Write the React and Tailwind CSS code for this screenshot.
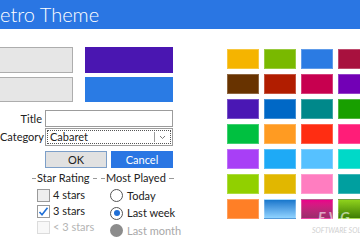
import React from "react";

const tiles = [
  ["bg-[#f5b400]", "bg-[#79b900]", "bg-[#2b7be3]", "bg-[#a8113e]"],
  ["bg-[#683300]", "bg-[#b11d00]", "bg-[#c7004f]", "bg-[#7200b6]"],
  ["bg-[#4a17b4]", "bg-[#0068c6]", "bg-[#00888a]", "bg-[#189f00]"],
  ["bg-[#00c040]", "bg-[#ff9b22]", "bg-[#ff2d12]", "bg-[#ff1d78]"],
  ["bg-[#a83ff6]", "bg-[#1eaaf6]", "bg-[#56c1ff]", "bg-[#00d9c8]"],
  ["bg-[#91d000]", "bg-[#e1b700]", "bg-[#ff7dc0]", "bg-[#009f9f]"],
  [
    "bg-[#ff7f26]",
    "bg-gradient-to-b from-[#1677cc] to-[#8fd3ff]",
    "bg-gradient-to-b from-[#ea008a] to-[#9a2c6c]",
    "bg-gradient-to-b from-[#8fd21c] to-[#3f7d05]",
  ],
];

const Legend = ({ children }) => (
  <div className="flex items-center h-[14px] text-[#222] whitespace-nowrap">
    <span className="w-[4px] h-px bg-[#9a9a9a] shrink-0" />
    <span className="px-[1px]">{children}</span>
    <span className="flex-1 h-px bg-[#9a9a9a] ml-[2px]" />
  </div>
);

const Check = ({ checked, disabled, label }) => (
  <div className="flex items-center h-[16px] gap-[3px] whitespace-nowrap">
    <span
      className={`shrink-0 w-[13px] h-[13px] border flex items-center justify-center ${
        disabled
          ? "border-[#dcdcdc] bg-[#f8f8f8]"
          : checked
          ? "border-[#9a9a9a] bg-white"
          : "border-[#9a9a9a] bg-[#eeeeee]"
      }`}
    >
      {checked && (
        <svg width="11" height="11" viewBox="0 0 11 11">
          <path d="M1.5 6 L4 8.8 L9.5 1.8" stroke="#1f6fd6" strokeWidth="1.6" fill="none" />
        </svg>
      )}
    </span>
    <span className={disabled ? "text-[#b4b4b4]" : "text-[#222]"}>{label}</span>
  </div>
);

const Radio = ({ state, label }) => (
  <div className="flex items-center h-[17.5px] gap-[4px] whitespace-nowrap">
    {state === "disabled" ? (
      <span className="shrink-0 w-[13px] h-[13px] rounded-full bg-[#8c8c8c]" />
    ) : (
      <span className="shrink-0 w-[13px] h-[13px] rounded-full border border-[#555] bg-white flex items-center justify-center">
        {state === "on" && <span className="w-[6px] h-[6px] rounded-full bg-[#1f6fd6]" />}
      </span>
    )}
    <span className={state === "disabled" ? "text-[#a8a8a8]" : "text-[#222]"}>{label}</span>
  </div>
);

export default function App() {
  return (
    <div className="w-[360px] h-[240px] overflow-hidden bg-white relative font-['Lato',sans-serif] text-[11px] leading-[14px]">
      <div className="h-[29px] bg-[#2a76e3] flex items-center">
        <span className="text-white text-[20px] font-light leading-none -mt-[1px]">etro Theme</span>
      </div>

      <div className="flex">
        <div className="w-[174px] pt-[18px]">
          <div className="grid grid-cols-[73px_88px] grid-rows-[26px_25px] gap-x-[12px] gap-y-[4px]">
            <div className="bg-[#e6e6e6] border border-l-0 border-[#adadad]" />
            <div className="bg-[#4a16b1]" />
            <div className="bg-[#e6e6e6] border border-l-0 border-[#adadad]" />
            <div className="bg-[#2a7be4]" />
          </div>

          <div className="mt-[8px] flex items-center h-[17px]">
            <span className="w-[42px] text-right text-[#222]">Title</span>
            <div className="ml-[3px] w-[128px] h-[17px] border border-[#9c9c9c] bg-white" />
          </div>
          <div className="mt-[1px] flex items-center h-[18px]">
            <span className="w-[42px] text-right text-[#222] whitespace-nowrap">Category</span>
            <div className="ml-[3px] w-[128px] h-[18px] border border-[#9c9c9c] bg-white p-[1px]">
              <div className="h-full border border-dotted border-[#555] flex items-center">
                <span className="pl-[2px] flex-1 text-[#222]">Cabaret</span>
                <span className="w-px h-[10px] bg-[#9c9c9c]" />
                <svg width="15" height="10" viewBox="0 0 15 10">
                  <path d="M5 4 L7.5 6.5 L10 4" stroke="#777" strokeWidth="1" fill="none" />
                </svg>
              </div>
            </div>
          </div>
          <div className="mt-[5px] pl-[45px] flex gap-[4px]">
            <button className="w-[62px] h-[17px] border border-[#7d9fc8] bg-[#e1e1e1] text-[#222] leading-none">
              OK
            </button>
            <button className="w-[62px] h-[17px] bg-[#2a76e3] text-white leading-none">Cancel</button>
          </div>

          <div className="mt-[3px] flex">
            <div className="ml-[32px] w-[65px]">
              <Legend>Star Rating</Legend>
              <div className="pl-[5px] pt-[2px]">
                <Check label="4 stars" />
                <Check checked label="3 stars" />
                <Check disabled label="< 3 stars" />
              </div>
            </div>
            <div className="ml-[4px] w-[73px]">
              <Legend>Most Played</Legend>
              <div className="pl-[9px] pt-[2px]">
                <Radio label="Today" />
                <Radio state="on" label="Last week" />
                <Radio state="disabled" label="Last month" />
              </div>
            </div>
          </div>
        </div>

        <div className="ml-[53px] pt-[20px] grid grid-cols-[32px_32px_32px_32px] auto-rows-[20px] gap-x-[5px] gap-y-[5px]">
          {tiles.flat().map((c, i) => (
            <div key={i} className={`${c} border border-white/25`} />
          ))}
        </div>
      </div>

      <div className="absolute left-[318px] top-[210px] text-white/60 italic font-bold text-[14px] leading-none tracking-[3px]">
        EVG
      </div>
      <div className="absolute left-[312px] top-[227px] text-[#cfcfcf] italic text-[7px] leading-none whitespace-nowrap">
        SOFTWARE SOL
      </div>
    </div>
  );
}
